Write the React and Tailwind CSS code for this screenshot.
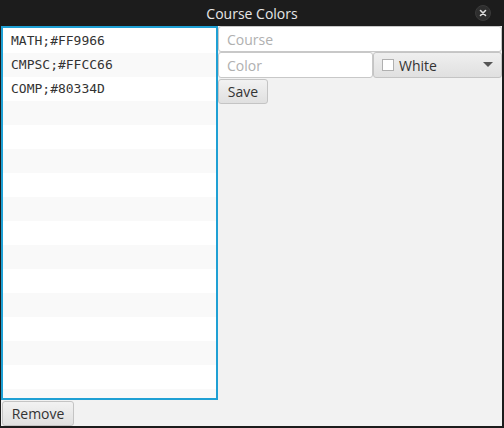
import React from 'react'

const items = ['MATH;#FF9966', 'CMPSC;#FFCC66', 'COMP;#80334D']

function App() {
  const rows = Array.from({ length: 16 }, (_, i) => items[i] || '')

  return (
    <div className="w-[504px] h-[428px] bg-[#1c1c1c] flex flex-col overflow-hidden" style={{ fontFamily: '"Open Sans", sans-serif' }}>
      <div className="h-[26px] flex items-center justify-center relative shrink-0">
        <span className="text-[14px] text-[#e6e6e6]">Course Colors</span>
        <div className="absolute right-[13px] top-[5px] w-[16px] h-[16px] rounded-full bg-[#2e2e2e] border border-[#3a3a3a] flex items-center justify-center">
          <svg width="8" height="8" viewBox="0 0 8 8">
            <path d="M1.5 1.5 L6.5 6.5 M6.5 1.5 L1.5 6.5" stroke="#e0e0e0" strokeWidth="1.6" strokeLinecap="round" />
          </svg>
        </div>
      </div>
      <div className="ml-px mr-[2px] h-[400px] bg-[#f2f2f2] flex">
        <div className="w-[217px] flex flex-col">
          <div className="h-[374px] border-2 border-[#1fa0d4] bg-white overflow-hidden pt-px">
            {rows.map((t, i) => (
              <div
                key={i}
                className={`h-[24px] flex items-center pl-[8px] text-[13px] text-[#333] ${i % 2 === 1 ? 'bg-[#f9f9f9]' : 'bg-white'}`}
                style={{ fontFamily: '"DejaVu Sans Mono", monospace' }}
              >
                {t}
              </div>
            ))}
          </div>
          <button className="ml-px mt-px w-[72px] h-[25px] border border-[#c4c4c4] rounded-[3px] bg-gradient-to-b from-[#f2f2f2] to-[#e0e0e0] text-[14px] text-[#333] flex items-center justify-center">
            Remove
          </button>
        </div>
        <div className="flex-1 flex flex-col">
          <input
            placeholder="Course"
            className="h-[26px] w-full bg-white border border-[#c8c8c8] rounded-[3px] px-[8px] text-[14px] outline-none placeholder:text-[#b0b0b0]"
          />
          <div className="flex">
            <input
              placeholder="Color"
              className="h-[26px] w-[155px] bg-white border border-[#c8c8c8] rounded-[3px] px-[8px] text-[14px] outline-none placeholder:text-[#b0b0b0]"
            />
            <div className="flex-1 h-[26px] border border-[#c4c4c4] rounded-[3px] bg-gradient-to-b from-[#efefef] to-[#e0e0e0] flex items-center pl-[8px] pr-[8px]">
              <div className="w-[12px] h-[12px] bg-white border border-[#b0b0b0]"></div>
              <span className="ml-[5px] text-[14px] text-[#333]">White</span>
              <svg className="ml-auto" width="10" height="6" viewBox="0 0 10 6">
                <path d="M0 0 L10 0 L5 5 Z" fill="#555" />
              </svg>
            </div>
          </div>
          <button className="mt-px w-[50px] h-[25px] border border-[#c4c4c4] rounded-[3px] bg-gradient-to-b from-[#f2f2f2] to-[#e0e0e0] text-[14px] text-[#333] flex items-center justify-center">
            Save
          </button>
        </div>
      </div>
    </div>
  )
}

export default App
